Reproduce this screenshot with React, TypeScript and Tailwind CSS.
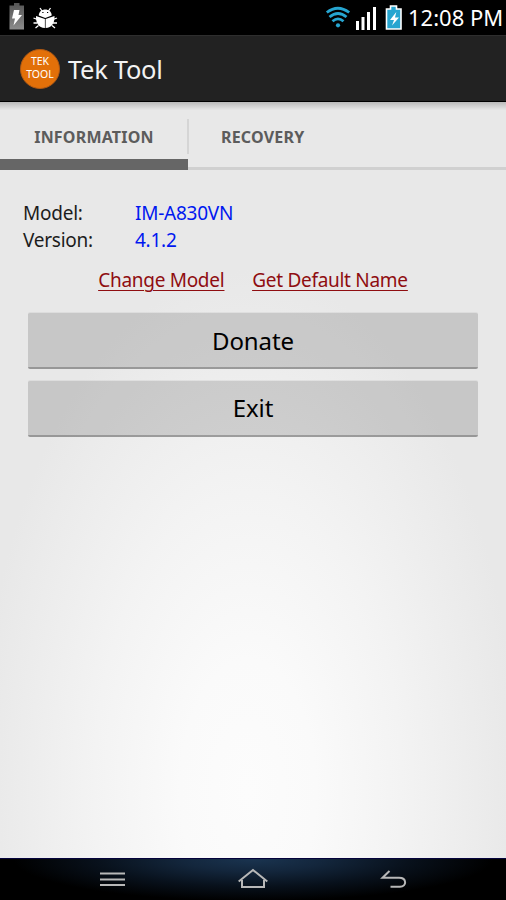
const StatusBar = () => (
  <div className="flex h-[35px] items-center bg-black text-white">
    <svg className="ml-[9px] h-[35px] w-[15px]" viewBox="9 0 15 35">
      <defs>
        <linearGradient id="battery" x1="0" y1="0" x2="0" y2="1">
          <stop offset="0" stopColor="#555" />
          <stop offset="1" stopColor="#8c8c8c" />
        </linearGradient>
      </defs>
      <path d="M14 3h5.500v2.500H24V29.500H9.500V5.500H14z" fill="url(#battery)" />
      <path d="M14 10h5.500l-1 5h3.500L13.500 25.500l1.500-7h-3z" fill="#fff" />
    </svg>
    <svg className="ml-[9px] h-[35px] w-[25px]" viewBox="33 0 25 35" fill="none" stroke="#fff">
      <path d="M40 8l2 3M50.500 8l-2 3M33.500 18l4 1.500M57 18l-4 1.500M33.500 23h4M57 23h-4M35.500 28l3-2.500M55 28l-3-2.500" strokeWidth="1.300" />
      <path d="M38.800 15.500c0-8 12.900-8 12.900 0l-6.400 2.500z" fill="#fff" stroke="none" />
      <path d="M36 16l8.900 3v9c-6.300-.3-9.200-5-8.900-12zM54.500 16l-8.900 3v9c6.300-.3 9.200-5 8.900-12z" fill="#fff" stroke="none" />
      <path d="M42.300 12.500h1.200M47 12.500h1.200" stroke="#000" strokeWidth="1.200" />
    </svg>
    <svg className="ml-auto h-[35px] w-[80px]" viewBox="325 0 80 35">
      <g fill="none" stroke="#26a5d0" strokeWidth="2.800">
        <path d="M326.800 12.500q11-8.500 22.400 0" />
        <path d="M329.500 17q8.500-7 17 0" />
        <path d="M332.500 21.300q5.500-4.800 11 0" />
      </g>
      <circle cx="338" cy="25.300" r="2.100" fill="#26a5d0" />
      <path d="M356 21h3v9h-3zM361.500 17h3v13h-3zM367 12h3v18h-3zM373 7h3v23h-3z" fill="#fff" />
      <path d="M390.500 6h6v3h4.500v20h-14.500V9h4z" fill="#26a5d0" stroke="#fff" strokeWidth="1.600" />
      <path d="M396.300 12l-6.300 8h4l-2 5.500 7-8h-4z" fill="#fff" />
    </svg>
    <span className="ml-[3px] w-[98px] whitespace-nowrap text-[22px] leading-[35px]">12:08 PM</span>
  </div>
);

const ActionBar = () => (
  <header className="flex h-[67px] items-center border-y border-t-[#2e2e2e] border-b-black bg-[#222]">
    <div className="ml-5 flex size-10 flex-col items-center justify-center rounded-full border border-[#ae5813] bg-[#e27009] pb-[2px] text-[10.500px] leading-[13px] text-white">
      <span>TEK</span>
      <span>TOOL</span>
    </div>
    <h1 className="ml-2 pt-px text-[25.500px] tracking-[-0.3px] text-[#f3f3f3]">Tek Tool</h1>
  </header>
);

const Tabs = () => (
  <nav className="flex h-[68px] bg-linear-to-b from-black/20 via-black/0 via-12% to-transparent text-[16px] font-bold tracking-[0.2px] text-[#5c5c5c]">
    <div className="flex w-[188px] items-center justify-center border-b-[11px] border-[#666] pt-[13px]">INFORMATION</div>
    <div className="flex flex-1 items-start border-b-[3px] border-[#d0d0d0]">
      <div className="-ml-px mt-[17px] h-[35px] w-[2px] bg-[#d5d5d5]" />
      <span className="ml-8 mt-[23px]">RECOVERY</span>
    </div>
  </nav>
);

const info = [
  { label: 'Model:', value: 'IM-A830VN' },
  { label: 'Version:', value: '4.1.2' },
];

const ActionButton = ({ label }: { label: string }) => (
  <button className="block h-[57px] w-full rounded-[2px] border-t border-b-2 border-t-black/5 border-b-black/35 bg-black/14 bg-clip-padding pt-px text-[24px] tracking-[-0.1px] text-black">
    {label}
  </button>
);

const NavBar = () => (
  <footer className="h-[42px] border-t border-[#05033c] bg-black bg-[radial-gradient(ellipse_240px_42px_at_50%_0,#1a3450,#13263c_30%,#08111c_65%,#000)]">
    <svg className="h-[41px] w-full" viewBox="0 859 506 41" fill="none" stroke="#b8b8b8" strokeWidth="2">
      <path d="M100 873.500h25M100 879.500h25M100 885h25" />
      <path d="M238.700 881.500l14.300-11.500 14.300 11.500M242 880v7h22v-7" />
      <path d="M389.500 871l-7 6.800h16.500c8 0 8 9 1 9h-9.500" />
    </svg>
  </footer>
);

export default function App() {
  return (
    <div className="flex h-[900px] w-[506px] flex-col overflow-hidden font-['Noto_Sans',sans-serif]">
      <StatusBar />
      <ActionBar />
      <div className="flex flex-1 flex-col bg-[radial-gradient(ellipse_270px_520px_at_248px_688px,#fcfcfc,#fafafa_25%,#f3f3f3_57%,#e8e8e8)]">
        <Tabs />
        <main className="px-7 pt-[30px] text-[19px]">
          <dl className="-ml-[5px] tracking-[-0.25px]">
            {info.map(({ label, value }) => (
              <div key={label} className="flex h-[27px] items-center">
                <dt className="w-[112px] text-[#1c1c1c]">{label}</dt>
                <dd className="text-[#0018f0]">{value}</dd>
              </div>
            ))}
          </dl>
          <div className="mt-[12px] flex h-[28px] items-center justify-center gap-7 tracking-[-0.3px] text-[#8f0d10] underline underline-offset-[3px] decoration-1">
            <a>Change Model</a>
            <a>Get Default Name</a>
          </div>
          <div className="mt-[18px] space-y-[10.500px]">
            <ActionButton label="Donate" />
            <ActionButton label="Exit" />
          </div>
        </main>
      </div>
      <NavBar />
    </div>
  );
}
